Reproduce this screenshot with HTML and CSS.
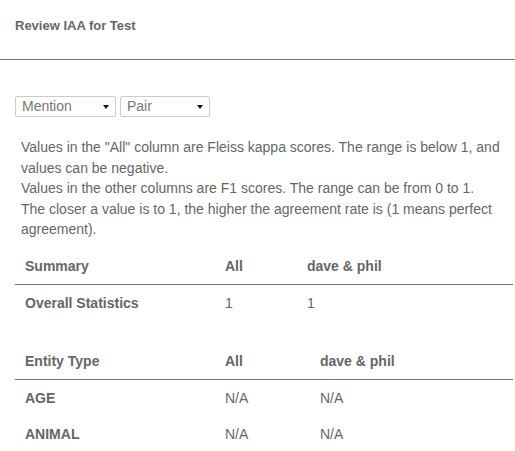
FILE: index.html
```html
<!DOCTYPE html>
<html>
<head>
<meta charset="utf-8">
<link rel="stylesheet" href="styles.css">
</head>
<body>
<header class="topbar"><h1 class="title">Review IAA for Test</h1></header>
<main class="content">
  <div class="filters">
    <div class="select select-mention"><span>Mention</span><i class="caret"></i></div>
    <div class="select select-pair"><span>Pair</span><i class="caret"></i></div>
  </div>
  <p class="note">Values in the "All" column are Fleiss kappa scores. The range is below 1, and values can be negative.<br>Values in the other columns are F1 scores. The range can be from 0 to 1.<br>The closer a value is to 1, the higher the agreement rate is (1 means perfect agreement).</p>
  <table class="stats summary">
    <colgroup><col class="c1"><col class="c2a"><col></colgroup>
    <thead><tr><th>Summary</th><th>All</th><th>dave &amp; phil</th></tr></thead>
    <tbody><tr><th>Overall Statistics</th><td>1</td><td>1</td></tr></tbody>
  </table>
  <table class="stats entity">
    <colgroup><col class="c1"><col class="c2b"><col></colgroup>
    <thead><tr><th>Entity Type</th><th>All</th><th>dave &amp; phil</th></tr></thead>
    <tbody>
      <tr><th>AGE</th><td>N/A</td><td>N/A</td></tr>
      <tr><th>ANIMAL</th><td>N/A</td><td>N/A</td></tr>
    </tbody>
  </table>
</main>
</body>
</html>
```
FILE: styles.css
```css
html, body { margin: 0; padding: 0; background: #fff; }
body { font-family: "Liberation Sans", Arial, sans-serif; font-size: 14px; color: #666; }
.topbar { height: 59px; border-bottom: 1px solid #777; padding: 0 15px; box-sizing: content-box; }
.title { margin: 0; padding-top: 18px; font-size: 13px; line-height: 16px; font-weight: bold; color: #666; }
.content { padding: 36px 2px 0 15px; }
.filters { display: flex; gap: 4px; }
.select { position: relative; box-sizing: border-box; height: 21px; border: 1px solid #ccc; border-radius: 2px; padding-left: 6px; line-height: 19px; font-size: 14px; color: #777; }
.select-mention { width: 101px; }
.select-pair { width: 90px; }
.caret { position: absolute; right: 6px; top: 8px; width: 0; height: 0; border-left: 3px solid transparent; border-right: 3px solid transparent; border-top: 4px solid #111; }
.note { margin: 20px 0 0 6px; line-height: 20.5px; }
.stats { width: 100%; border-collapse: collapse; }
.stats th, .stats td { text-align: left; padding: 0 10px; height: 36px; font-size: 14px; color: #666; }
.stats th { font-weight: bold; }
.stats td { font-weight: normal; }
.stats thead th { border-bottom: 1px solid #777; }
.c1 { width: 200px; }
.c2a { width: 82px; }
.c2b { width: 95px; }
.summary { margin-top: 8px; }
.entity { margin-top: 22px; }
```
